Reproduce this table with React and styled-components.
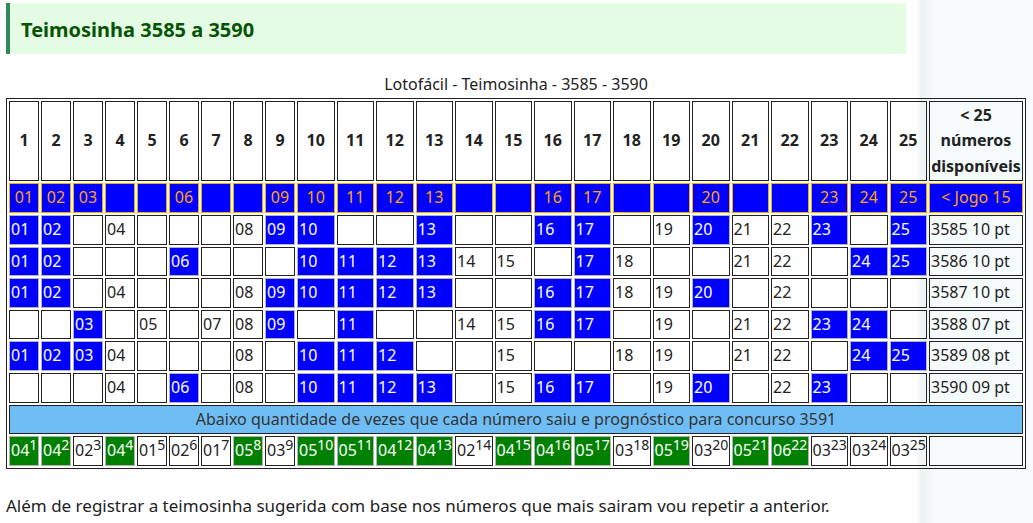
import React from "react";
import styled, { createGlobalStyle, css } from "styled-components";

const jogo = [1, 2, 3, 6, 9, 10, 11, 12, 13, 16, 17, 20, 23, 24, 25];

const draws = [
  { label: "3585 10 pt", nums: [1, 2, 4, 8, 9, 10, 13, 16, 17, 19, 20, 21, 22, 23, 25] },
  { label: "3586 10 pt", nums: [1, 2, 6, 10, 11, 12, 13, 14, 15, 17, 18, 21, 22, 24, 25] },
  { label: "3587 10 pt", nums: [1, 2, 4, 8, 9, 10, 11, 12, 13, 16, 17, 18, 19, 20, 22] },
  { label: "3588 07 pt", nums: [3, 5, 7, 8, 9, 11, 14, 15, 16, 17, 19, 21, 22, 23, 24] },
  { label: "3589 08 pt", nums: [1, 2, 3, 4, 8, 10, 11, 12, 15, 18, 19, 21, 22, 24, 25] },
  { label: "3590 09 pt", nums: [4, 6, 8, 10, 11, 12, 13, 15, 16, 17, 19, 20, 22, 23] },
];

const counts = [4, 4, 2, 4, 1, 2, 1, 5, 3, 5, 5, 4, 4, 2, 4, 4, 5, 3, 5, 3, 5, 6, 3, 3, 3];
const greens = [1, 2, 4, 8, 10, 11, 12, 13, 15, 16, 17, 19, 21, 22];

const numbers = Array.from({ length: 25 }, (_, i) => i + 1);
const pad = (n) => (n < 10 ? `0${n}` : `${n}`);

const GlobalStyle = createGlobalStyle`
  body {
    margin: 0;
    font-family: "Noto Sans", "Open Sans", sans-serif;
    color: #222;
    background: linear-gradient(
      to right,
      #ffffff 916px,
      #edf2f3 922px,
      #f5fafb 934px
    );
  }
`;

const Page = styled.div`
  padding: 3px 6px;
`;

const Heading = styled.h2`
  margin: 0;
  width: 900px;
  box-sizing: border-box;
  padding: 13px 11px 11px;
  background: #e4fce4;
  border-left: 4px solid #2e8b57;
  color: #075407;
  font-size: 20px;
  line-height: 27px;
  font-weight: 700;
`;

const Table = styled.table`
  margin-top: 18px;
  width: 1020px;
  table-layout: fixed;
  border: 1px solid #222;
  border-spacing: 2px;
  font-size: 16px;
  line-height: 1.6;

  caption {
    caption-side: top;
    text-align: center;
  }
`;

const variants = {
  head: css`
    border-color: #222;
    font-weight: 700;
    text-align: center;
  `,
  jogo: css`
    background: #0000ff;
    border-color: #ffa500;
    color: #ffa500;
    text-align: center;
  `,
  hit: css`
    background: #0000ff;
    border-color: #b4b4b4;
    color: #fff;
  `,
  green: css`
    background: #008000;
    border-color: #b4b4b4;
    color: #fff;
  `,
  plain: css`
    border-color: #222;
  `,
  banner: css`
    background: #6fbdf5;
    border-color: #222;
    color: #333;
    text-align: center;
  `,
};

const Cell = styled.td`
  padding: 1px;
  border: 1px solid;
  vertical-align: middle;
  white-space: nowrap;
  ${({ $kind }) => variants[$kind]}
  ${({ $wrap }) => $wrap && "white-space: normal;"}

  sup {
    font-size: 0.88em;
    line-height: 1;
    vertical-align: 0.42em;
  }
`;

const Note = styled.p`
  margin: 23px 0 0;
  font-size: 17px;
  line-height: 1.6;
`;

export default function App() {
  return (
    <>
      <GlobalStyle />
      <Page>
        <Heading>Teimosinha 3585 a 3590</Heading>
        <Table>
          <caption>Lotofácil - Teimosinha - 3585 - 3590</caption>
          <colgroup>
            {numbers.map((n) => (
              <col key={n} style={{ width: n < 10 ? 30 : 37.5 }} />
            ))}
            <col style={{ width: 94 }} />
          </colgroup>
          <tbody>
            <tr>
              {numbers.map((n) => (
                <Cell as="th" $kind="head" key={n}>
                  {n}
                </Cell>
              ))}
              <Cell as="th" $kind="head" $wrap>
                &lt; 25 números disponíveis
              </Cell>
            </tr>
            <tr>
              {numbers.map((n) => (
                <Cell $kind="jogo" key={n}>
                  {jogo.includes(n) ? pad(n) : ""}
                </Cell>
              ))}
              <Cell $kind="jogo">&lt; Jogo 15</Cell>
            </tr>
            {draws.map((d) => (
              <tr key={d.label}>
                {numbers.map((n) => {
                  const drawn = d.nums.includes(n);
                  const hit = drawn && jogo.includes(n);
                  return (
                    <Cell $kind={hit ? "hit" : "plain"} key={n}>
                      {drawn ? pad(n) : ""}
                    </Cell>
                  );
                })}
                <Cell $kind="plain">{d.label}</Cell>
              </tr>
            ))}
            <tr>
              <Cell $kind="banner" colSpan={26}>
                Abaixo quantidade de vezes que cada número saiu e prognóstico para concurso 3591
              </Cell>
            </tr>
            <tr>
              {numbers.map((n, i) => (
                <Cell $kind={greens.includes(n) ? "green" : "plain"} key={n}>
                  {pad(counts[i])}
                  <sup>{n}</sup>
                </Cell>
              ))}
              <Cell $kind="plain" />
            </tr>
          </tbody>
        </Table>
        <Note>
          Além de registrar a teimosinha sugerida com base nos números que mais sairam vou repetir a anterior.
        </Note>
      </Page>
    </>
  );
}
